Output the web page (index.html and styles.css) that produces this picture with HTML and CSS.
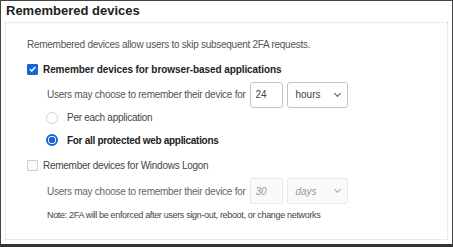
FILE: index.html
```html
<!DOCTYPE html>
<html lang="en">
<head>
    <meta charset="UTF-8">
    <title>Remembered devices</title>
    <link rel="stylesheet" href="styles.css">
</head>
<body>

    <div class="panel">
        <h2 class="panel-title">Remembered devices</h2>

        <div class="group">
            <p class="intro">Remembered devices allow users to skip subsequent 2FA requests.</p>

            <label class="option browser strong">
                <span class="check checked">
                    <svg viewBox="0 0 10 10" width="10" height="10"><path d="M2 5.2 L4.2 7.3 L8.2 2.8" fill="none" stroke="#fff" stroke-width="1.6"/></svg>
                </span>
                Remember devices for browser-based applications
            </label>

            <div class="duration">
                <span class="duration-text">Users may choose to remember their device for</span>
                <input class="num" type="text" value="24">
                <div class="select">hours <span class="caret"></span></div>
            </div>

            <label class="option radio-row per-app">
                <span class="radio"></span>
                Per each application
            </label>
            <label class="option radio-row all-apps strong">
                <span class="radio on"></span>
                For all protected web applications
            </label>

            <label class="option windows">
                <span class="check"></span>
                Remember devices for Windows Logon
            </label>

            <div class="duration disabled">
                <span class="duration-text">Users may choose to remember their device for</span>
                <input class="num" type="text" value="30" disabled>
                <div class="select">days <span class="caret"></span></div>
            </div>

            <p class="note">Note: 2FA will be enforced after users sign-out, reboot, or change networks</p>
        </div>
    </div>

</body>
</html>
```

FILE: styles.css
```css
body {
    margin: 0;
    font-family: "Liberation Sans", Arial, sans-serif;
    color: #333;
    background: #fff;
}
.panel {
    box-sizing: border-box;
    width: 453px;
    height: 247px;
    border: 1px solid #444;
    border-bottom: 3px solid #333;
    padding: 0 4px;
}
.panel-title {
    margin: 0;
    padding: 2px 1px 0;
    height: 19px;
    font-size: 13px;
    font-weight: bold;
    color: #222;
}
.group {
    height: 218px;
    box-sizing: border-box;
    border: 1px dotted #cfd8e2;
    padding: 15px 0 0 21px;
    font-size: 10px;
    letter-spacing: -0.27px;
    color: #555;
}
.intro {
    margin: 0;
    height: 14px;
    line-height: 14px;
}
.option {
    display: flex;
    align-items: center;
    gap: 5px;
    color: #444;
}
.browser {
    margin-top: 6px;
    height: 22px;
    letter-spacing: -0.08px;
}
.strong {
    font-weight: bold;
    color: #222;
}
.windows {
    height: 23px;
}
.check {
    box-sizing: border-box;
    width: 11px;
    height: 11px;
    border: 1px solid #c8ced6;
    border-radius: 1px;
    background: #fafbfc;
    display: flex;
    align-items: center;
    justify-content: center;
}
.check.checked {
    background: #1766d8;
    border-color: #1766d8;
}
.duration {
    display: flex;
    align-items: center;
    height: 29px;
    padding-left: 20px;
}
.duration.disabled {
    height: 28px;
}
.duration-text {
    margin-right: 4px;
}
.num {
    box-sizing: border-box;
    width: 33px;
    height: 26px;
    border: 1px solid #c4c4c4;
    border-radius: 3px;
    padding: 0 5px;
    font: inherit;
    letter-spacing: 0;
    color: #444;
    background: #fff;
    margin-right: 4px;
}
.select {
    box-sizing: border-box;
    width: 61px;
    height: 26px;
    border: 1px solid #c4c4c4;
    border-radius: 3px;
    padding: 0 7px 0 8px;
    display: flex;
    align-items: center;
    justify-content: space-between;
    letter-spacing: 0;
    color: #444;
}
.caret {
    width: 4px;
    height: 4px;
    border-right: 1px solid #555;
    border-bottom: 1px solid #555;
    transform: rotate(45deg);
    margin-top: -3px;
}
.radio-row {
    padding-left: 19px;
    gap: 9px;
}
.per-app {
    height: 17px;
}
.all-apps {
    height: 28px;
    letter-spacing: -0.3px;
}
.radio {
    box-sizing: border-box;
    width: 12px;
    height: 12px;
    border: 1px solid #cfd4da;
    border-radius: 50%;
    background: #fff;
}
.radio.on {
    border: 2px solid #1766d8;
    background: radial-gradient(circle, #1766d8 0 3px, #fff 3.5px);
}
.disabled {
    color: #666;
}
.disabled .num,
.disabled .select {
    border: 1px dotted #d6d6d6;
    background: #fafafa;
    color: #999;
    font-style: italic;
}
.disabled .caret {
    border-color: #aaa;
}
.note {
    margin: 0 0 0 20px;
    line-height: 20px;
    font-size: 9px;
    letter-spacing: -0.33px;
    color: #444;
}
```
